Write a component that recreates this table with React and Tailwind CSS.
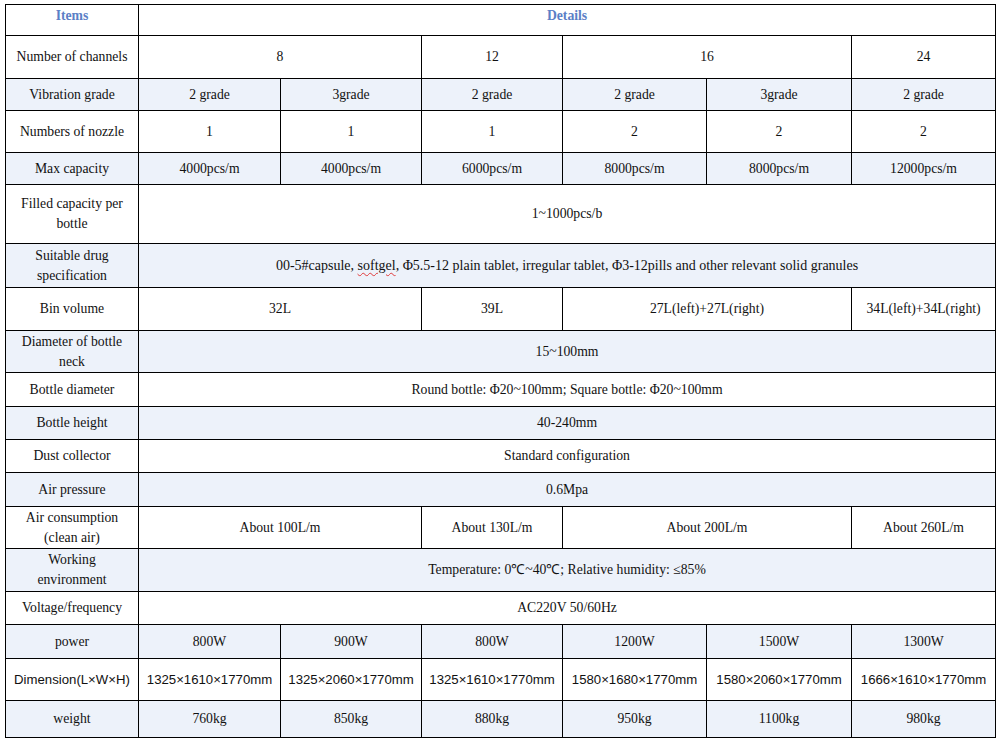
import React from 'react';

const serif = { fontFamily: '"Liberation Serif", "Times New Roman", serif' };
const sans = { fontFamily: '"Liberation Sans", Arial, sans-serif' };

const rows = [
    { label: ['Number of channels'], h: 'h-[43px]', cells: [['8', 2], ['12', 1], ['16', 2], ['24', 1]] },
    { label: ['Vibration grade'], h: 'h-[32px]', alt: true, cells: [['2 grade'], ['3grade'], ['2 grade'], ['2 grade'], ['3grade'], ['2 grade']] },
    { label: ['Numbers of nozzle'], h: 'h-[42px]', cells: [['1'], ['1'], ['1'], ['2'], ['2'], ['2']] },
    { label: ['Max capacity'], h: 'h-[32px]', alt: true, cells: [['4000pcs/m'], ['4000pcs/m'], ['6000pcs/m'], ['8000pcs/m'], ['8000pcs/m'], ['12000pcs/m']] },
    { label: ['Filled capacity per', 'bottle'], h: 'h-[59px]', cells: [['1~1000pcs/b', 6]] },
    { label: ['Suitable drug', 'specification'], h: 'h-[44px]', alt: true, cells: [['drug', 6]] },
    { label: ['Bin volume'], h: 'h-[43px]', cells: [['32L', 2], ['39L', 1], ['27L(left)+27L(right)', 2], ['34L(left)+34L(right)', 1]] },
    { label: ['Diameter of bottle', 'neck'], h: 'h-[42px]', alt: true, cells: [['15~100mm', 6]] },
    { label: ['Bottle diameter'], h: 'h-[34px]', cells: [['Round bottle: Φ20~100mm; Square bottle: Φ20~100mm', 6]] },
    { label: ['Bottle height'], h: 'h-[33px]', alt: true, cells: [['40-240mm', 6]] },
    { label: ['Dust collector'], h: 'h-[33px]', cells: [['Standard configuration', 6]] },
    { label: ['Air pressure'], h: 'h-[34px]', alt: true, cells: [['0.6Mpa', 6]] },
    { label: ['Air consumption', '(clean air)'], h: 'h-[42px]', cells: [['About 100L/m', 2], ['About 130L/m', 1], ['About 200L/m', 2], ['About 260L/m', 1]] },
    { label: ['Working', 'environment'], h: 'h-[43px]', alt: true, cells: [['Temperature: 0℃~40℃; Relative humidity: ≤85%', 6]] },
    { label: ['Voltage/frequency'], h: 'h-[33px]', cells: [['AC220V 50/60Hz', 6]] },
    { label: ['power'], h: 'h-[34px]', alt: true, cells: [['800W'], ['900W'], ['800W'], ['1200W'], ['1500W'], ['1300W']] },
    { label: ['Dimension(L×W×H)'], h: 'h-[42px]', sans: true, cells: [['1325×1610×1770mm'], ['1325×2060×1770mm'], ['1325×1610×1770mm'], ['1580×1680×1770mm'], ['1580×2060×1770mm'], ['1666×1610×1770mm']] },
    { label: ['weight'], h: 'h-[37px]', alt: true, cells: [['760kg'], ['850kg'], ['880kg'], ['950kg'], ['1100kg'], ['980kg']] },
];

const DrugText = () => (
    <span className="text-[14px]">
        00-5#capsule, <span className="underline decoration-wavy decoration-[#e03a3a] decoration-1 underline-offset-2">softgel</span>, Φ5.5-12 plain tablet, irregular tablet, Φ3-12pills and other relevant solid granules
    </span>
);

export default function App() {
    return (
        <div className="min-h-[742px] w-[1002px] bg-white pl-[5px] pt-[4px] text-[13.7px] leading-[20px] text-[#111]" style={serif}>
            <table className="table-fixed border-collapse w-[990px]">
                <colgroup>
                    <col className="w-[133px]" />
                    <col className="w-[142px]" />
                    <col className="w-[141px]" />
                    <col className="w-[141px]" />
                    <col className="w-[144px]" />
                    <col className="w-[145px]" />
                    <col className="w-[144px]" />
                </colgroup>
                <tbody>
                    <tr className="h-[31px]">
                        <td className="border border-black text-center align-top pt-px font-bold text-[#5b7fc6]">Items</td>
                        <td colSpan={6} className="border border-black text-center align-top pt-px font-bold text-[#5b7fc6]">Details</td>
                    </tr>
                    {rows.map((row) => (
                        <tr key={row.label[0]} className={`${row.h} ${row.alt ? 'bg-[#edf2fa]' : 'bg-white'}`}>
                            <td
                                className={`border border-black text-center align-middle px-1 whitespace-nowrap ${row.sans ? 'text-[13.2px]' : ''}`}
                                style={row.sans ? sans : undefined}
                            >
                                {row.label.map((line, i) => (
                                    <div key={i}>{line}</div>
                                ))}
                            </td>
                            {row.cells.map(([text, span = 1], i) => (
                                <td
                                    key={i}
                                    colSpan={span}
                                    className={`border border-black text-center align-middle px-1 whitespace-nowrap ${row.sans ? 'text-[13.2px]' : ''}`}
                                    style={row.sans ? sans : undefined}
                                >
                                    {text === 'drug' ? <DrugText /> : text}
                                </td>
                            ))}
                        </tr>
                    ))}
                </tbody>
            </table>
        </div>
    );
}
